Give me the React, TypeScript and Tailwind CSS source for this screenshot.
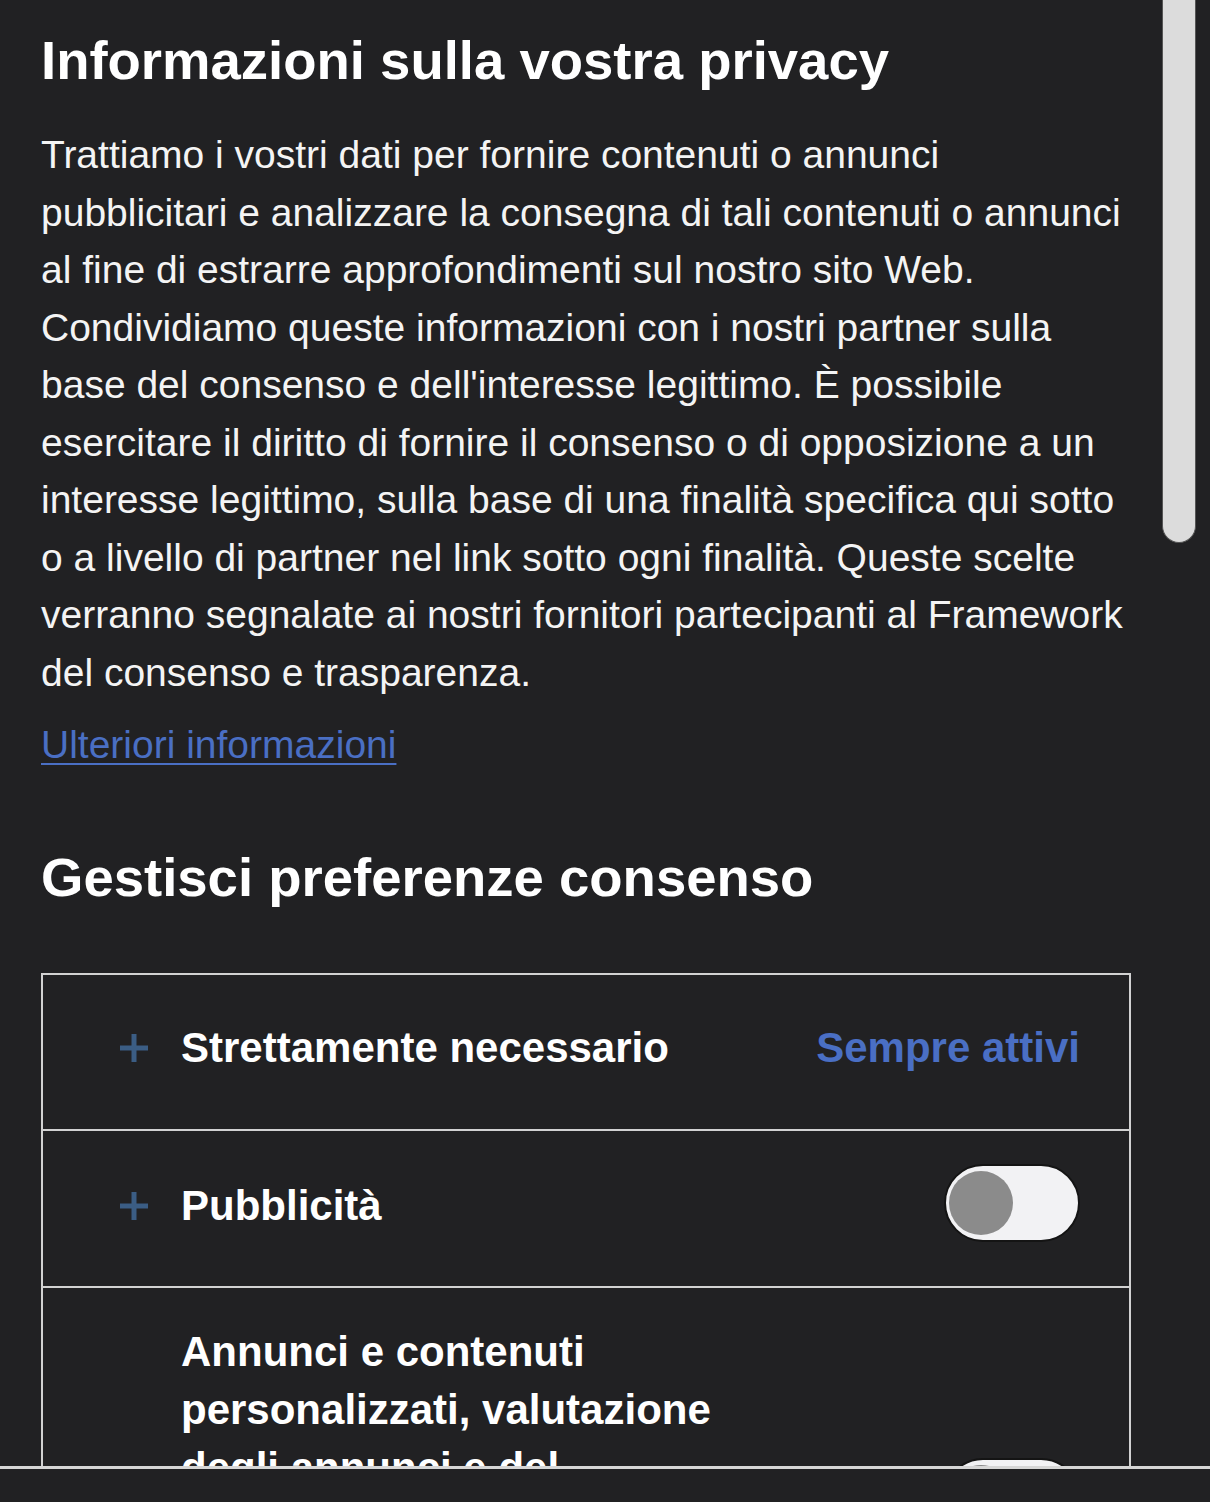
import React from 'react';

const Plus: React.FC = () => (
  <svg width="32" height="32" viewBox="0 0 32 32" className="shrink-0">
    <path d="M16 2v28M2 16h28" stroke="#3b5d84" strokeWidth="5" />
  </svg>
);

const Toggle: React.FC = () => (
  <div className="flex h-[78px] w-[136px] shrink-0 items-center rounded-full border-2 border-[#141414] bg-[#f2f2f4] pl-[3px]">
    <div className="h-[64px] w-[64px] rounded-full bg-[#8b8b8b]" />
  </div>
);

const App: React.FC = () => {
  return (
    <div className="relative h-[1502px] w-[1210px] overflow-hidden bg-[#212123] font-['Liberation_Sans',Arial,sans-serif] text-[#f4f4f4]">
      <div className="h-[1466px] overflow-hidden pl-[41px]">
        <h1 className="pt-[29px] text-[54.5px] font-bold leading-[64px] text-white">
          Informazioni sulla vostra privacy
        </h1>
        <p className="mt-[33px] w-[1091px] text-[39px] leading-[57.5px]">
          Trattiamo i vostri dati per fornire contenuti o annunci pubblicitari e analizzare la consegna di tali
          contenuti o annunci al fine di estrarre approfondimenti sul nostro sito Web. Condividiamo queste
          informazioni con i nostri partner sulla base del consenso e dell'interesse legittimo. È possibile
          esercitare il diritto di fornire il consenso o di opposizione a un interesse legittimo, sulla base di una
          finalità specifica qui sotto o a livello di partner nel link sotto ogni finalità. Queste scelte verranno
          segnalate ai nostri fornitori partecipanti al Framework del consenso e trasparenza.
        </p>
        <a href="#" className="mt-[15px] block w-fit text-[39px] leading-[57.5px] text-[#4a6fc4] underline decoration-2 underline-offset-[5px]">
          Ulteriori informazioni
        </a>
        <h2 className="mt-[72px] text-[54.5px] font-bold leading-[64px] text-white">
          Gestisci preferenze consenso
        </h2>

        <div className="mt-[63px] w-[1090px]">
          <div className="flex h-[158px] items-center border-2 border-[#d2d2d2] pb-[7px] pl-[75px] pr-[49px]">
            <Plus />
            <span className="ml-[31px] text-[42px] font-bold leading-[58px] text-white">Strettamente necessario</span>
            <span className="ml-auto text-[42px] font-bold leading-[58px] text-[#4a6fc4]">Sempre attivi</span>
          </div>
          <div className="flex h-[157px] items-center border-2 border-t-0 border-[#d2d2d2] pb-[5px] pl-[75px] pr-[49px]">
            <Plus />
            <span className="ml-[31px] text-[42px] font-bold leading-[58px] text-white">Pubblicità</span>
            <div className="mb-[6px] ml-auto">
              <Toggle />
            </div>
          </div>
          <div className="flex items-center border-2 border-t-0 border-[#d2d2d2] pb-[34px] pl-[138px] pr-[49px] pt-[35px]">
            <span className="w-[570px] text-[42px] font-bold leading-[58px] text-white">
              Annunci e contenuti personalizzati, valutazione degli annunci e del contenuto, osservazioni del
              pubblico e sviluppo di prodotti
            </span>
            <div className="ml-auto">
              <Toggle />
            </div>
          </div>
        </div>
      </div>
      <div className="h-[36px] border-t-[3px] border-[#d6d6d6] bg-[#212123]" />

      <div className="absolute right-[14px] top-0 h-[543px] w-[34px] rounded-b-full border border-t-0 border-[#555] bg-[#dcdcdc]" />
    </div>
  );
};

export default App;
